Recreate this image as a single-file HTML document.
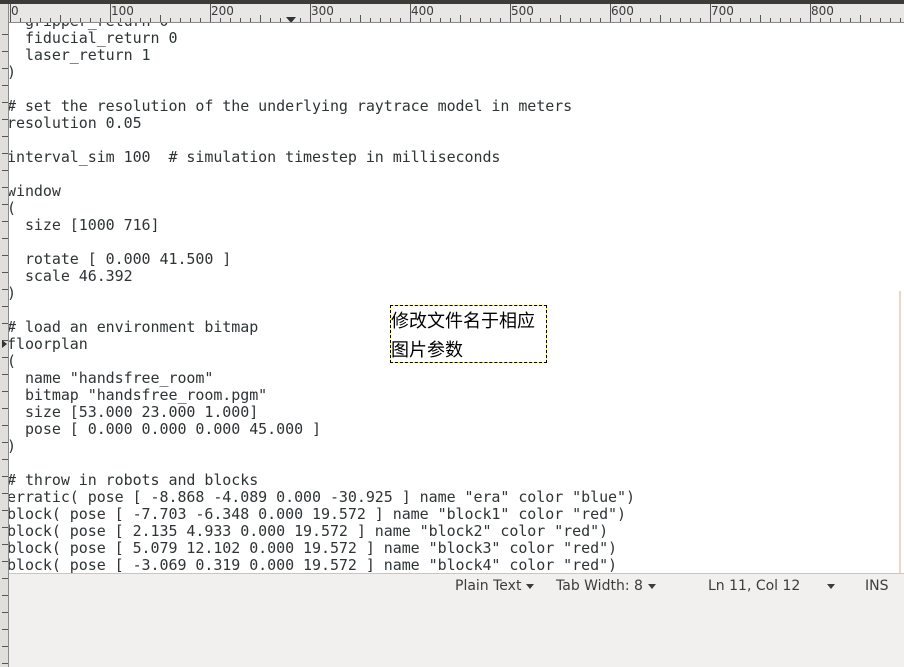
<!DOCTYPE html>
<html><head><meta charset="utf-8"><style>
*{margin:0;padding:0}
html,body{width:904px;height:667px;overflow:hidden}
body{background:#f1f0ee;position:relative;font-family:"DejaVu Sans Mono",monospace}
#top{position:absolute;left:0;top:0;width:904px;height:4px;background:#3c3b37}
#ruler{position:absolute;left:0;top:4px;width:904px;height:18px;background:#e8e7e5;border-bottom:1px solid #8a8a8a}
#lr{position:absolute;left:0;top:4px;width:8px;height:663px;background:#e0dfdc;border-right:1px solid #8a8a8a;z-index:3}
#ed{position:absolute;left:8px;top:23px;width:896px;height:550px;background:#fff;overflow:hidden;border-bottom:1px solid #c8c6c2}
pre{position:absolute;left:-1px;top:-10.5px;font:15px/17px "DejaVu Sans Mono",monospace;letter-spacing:-0.06px;color:#2e3436}
.lab{position:absolute;top:4px;font:12px "DejaVu Sans",sans-serif;color:#3a3a3a}
#note{position:absolute;left:390px;top:305px;width:155px;height:56px;border:1px dashed #000;background:#ff0;z-index:4}
#note div{position:absolute;left:0;top:0;right:0;bottom:0;background:#fff;font:18px/29px "Noto Sans CJK SC",sans-serif;color:#000}
.st{position:absolute;top:578px;font:14px "DejaVu Sans",sans-serif;color:#3c3c3c}
.tri{display:inline-block;width:0;height:0;border-left:4px solid transparent;border-right:4px solid transparent;border-top:5px solid #3c3c3c;vertical-align:middle;margin-left:5px}
</style></head><body>
<div id="top"></div>
<div id="ruler">
<div class="lab" style="left:11px;top:0">0</div>
<div class="lab" style="left:111px;top:0">100</div>
<div class="lab" style="left:211px;top:0">200</div>
<div class="lab" style="left:311px;top:0">300</div>
<div class="lab" style="left:411px;top:0">400</div>
<div class="lab" style="left:511px;top:0">500</div>
<div class="lab" style="left:611px;top:0">600</div>
<div class="lab" style="left:711px;top:0">700</div>
<div class="lab" style="left:811px;top:0">800</div>
<svg width="904" height="18" style="position:absolute;left:0;top:0">
<g stroke="#555" stroke-width="1">
<path d="M10.5 0V18M110.5 0V18M210.5 0V18M310.5 0V18M410.5 0V18M510.5 0V18M610.5 0V18M710.5 0V18M810.5 0V18"/>
<path d="M20.5 14V18M30.5 14V18M40.5 14V18M50.5 14V18M60.5 11V18M70.5 14V18M80.5 14V18M90.5 14V18M100.5 14V18M120.5 14V18M130.5 14V18M140.5 14V18M150.5 14V18M160.5 11V18M170.5 14V18M180.5 14V18M190.5 14V18M200.5 14V18M220.5 14V18M230.5 14V18M240.5 14V18M250.5 14V18M260.5 11V18M270.5 14V18M280.5 14V18M290.5 14V18M300.5 14V18M320.5 14V18M330.5 14V18M340.5 14V18M350.5 14V18M360.5 11V18M370.5 14V18M380.5 14V18M390.5 14V18M400.5 14V18M420.5 14V18M430.5 14V18M440.5 14V18M450.5 14V18M460.5 11V18M470.5 14V18M480.5 14V18M490.5 14V18M500.5 14V18M520.5 14V18M530.5 14V18M540.5 14V18M550.5 14V18M560.5 11V18M570.5 14V18M580.5 14V18M590.5 14V18M600.5 14V18M620.5 14V18M630.5 14V18M640.5 14V18M650.5 14V18M660.5 11V18M670.5 14V18M680.5 14V18M690.5 14V18M700.5 14V18M720.5 14V18M730.5 14V18M740.5 14V18M750.5 14V18M760.5 11V18M770.5 14V18M780.5 14V18M790.5 14V18M800.5 14V18M820.5 14V18M830.5 14V18M840.5 14V18M850.5 14V18M860.5 11V18M870.5 14V18M880.5 14V18M890.5 14V18M900.5 14V18"/>
</g>
<path d="M286 13h10l-5 6z" fill="#333"/>
</svg>
</div>
<div id="lr"><svg width="8" height="663"><g stroke="#555"><path d="M2 30.5h6M2 47.5h6M2 64.5h6M2 81.5h6M2 98.5h6M2 115.5h6M2 132.5h6M2 149.5h6M2 166.5h6M2 183.5h6M2 200.5h6M2 217.5h6M2 234.5h6M2 251.5h6M2 268.5h6M2 285.5h6M2 302.5h6M2 319.5h6M2 336.5h6M2 353.5h6M2 370.5h6M2 387.5h6M2 404.5h6M2 421.5h6M2 438.5h6M2 455.5h6M2 472.5h6M2 489.5h6M2 506.5h6M2 523.5h6M2 540.5h6M2 557.5h6M2 574.5h6M2 591.5h6M2 608.5h6M2 625.5h6M2 642.5h6M2 659.5h6"/></g><path d="M2 336l5 4-5 4z" fill="#333"/></svg></div>
<div id="ed"><pre>  gripper_return 0
  fiducial_return 0
  laser_return 1
)

# set the resolution of the underlying raytrace model in meters
resolution 0.05

interval_sim 100  # simulation timestep in milliseconds

window
(
  size [1000 716]

  rotate [ 0.000 41.500 ]
  scale 46.392
)

# load an environment bitmap
floorplan
(
  name "handsfree_room"
  bitmap "handsfree_room.pgm"
  size [53.000 23.000 1.000]
  pose [ 0.000 0.000 0.000 45.000 ]
)

# throw in robots and blocks
erratic( pose [ -8.868 -4.089 0.000 -30.925 ] name "era" color "blue")
block( pose [ -7.703 -6.348 0.000 19.572 ] name "block1" color "red")
block( pose [ 2.135 4.933 0.000 19.572 ] name "block2" color "red")
block( pose [ 5.079 12.102 0.000 19.572 ] name "block3" color "red")
block( pose [ -3.069 0.319 0.000 19.572 ] name "block4" color "red")
</pre>
<div style="position:absolute;left:891px;top:268px;width:2px;height:282px;background:#f3d3c3"></div>
</div>
<div id="note"><div>修改文件名于相应<br>图片参数</div></div>
<div class="st" style="left:455px">Plain Text<span class="tri"></span></div>
<div class="st" style="left:556px">Tab Width: 8<span class="tri"></span></div>
<div class="st" style="left:708px">Ln 11, Col 12</div>
<div class="st" style="left:822px"><span class="tri"></span></div>
<div class="st" style="left:865px">INS</div>
</body></html>
